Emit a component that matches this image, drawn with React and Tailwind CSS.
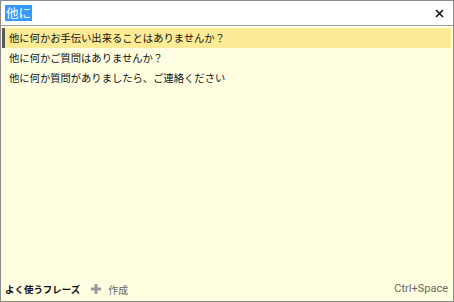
import React from 'react';

const phrases = [
  '他に何かお手伝い出来ることはありませんか？',
  '他に何かご質問はありませんか？',
  '他に何か質問がありましたら、ご連絡ください',
];

export default function App() {
  const selected = 0;

  return (
    <div
      className="w-[454px] h-[302px] flex flex-col border border-[#8c8c8c] bg-[#fffee0] overflow-hidden"
      style={{ fontFamily: '"Noto Sans CJK JP", "Noto Sans", sans-serif' }}
    >
      <div className="h-[25px] shrink-0 flex items-center bg-white border-b border-[#9a9a9a] pl-[4px] pr-[9px]">
        <span className="bg-[#3399ff] text-white text-[12.5px] leading-[16px] px-[1px]">他に</span>
        <div className="flex-1" />
        <svg width="9" height="9" viewBox="0 0 9 9" className="mt-[1px]">
          <path d="M1 1 L8 8 M8 1 L1 8" stroke="#111" strokeWidth="1.6" />
        </svg>
      </div>

      <div className="flex-1 flex flex-col pt-[2px] pr-[2px]">
        {phrases.map((p, i) => (
          <div
            key={p}
            className={
              'h-[20px] flex items-center text-[10.3px] text-[#111] ' +
              (i === selected
                ? 'bg-[#feeb95] border-l-[3px] border-[#5a5a5a] pl-[4px] ml-[1px]'
                : 'pl-[8px]')
            }
          >
            {p}
          </div>
        ))}
      </div>

      <div className="h-[20px] shrink-0 flex items-center pl-[4px] pr-[5px] mb-[2px]">
        <span className="font-bold text-[9.5px] text-[#111]">よく使うフレーズ</span>
        <svg width="10" height="10" viewBox="0 0 10 10" className="ml-[11px]">
          <path d="M3.5 0 H6.5 V3.5 H10 V6.5 H6.5 V10 H3.5 V6.5 H0 V3.5 H3.5 Z" fill="#9a9a9a" />
        </svg>
        <span className="ml-[7px] text-[10px] text-[#666]">作成</span>
        <div className="flex-1" />
        <span
          className="text-[11px] text-[#666]"
          style={{ fontFamily: 'Roboto, "Liberation Sans", sans-serif' }}
        >
          Ctrl+Space
        </span>
      </div>
    </div>
  );
}
